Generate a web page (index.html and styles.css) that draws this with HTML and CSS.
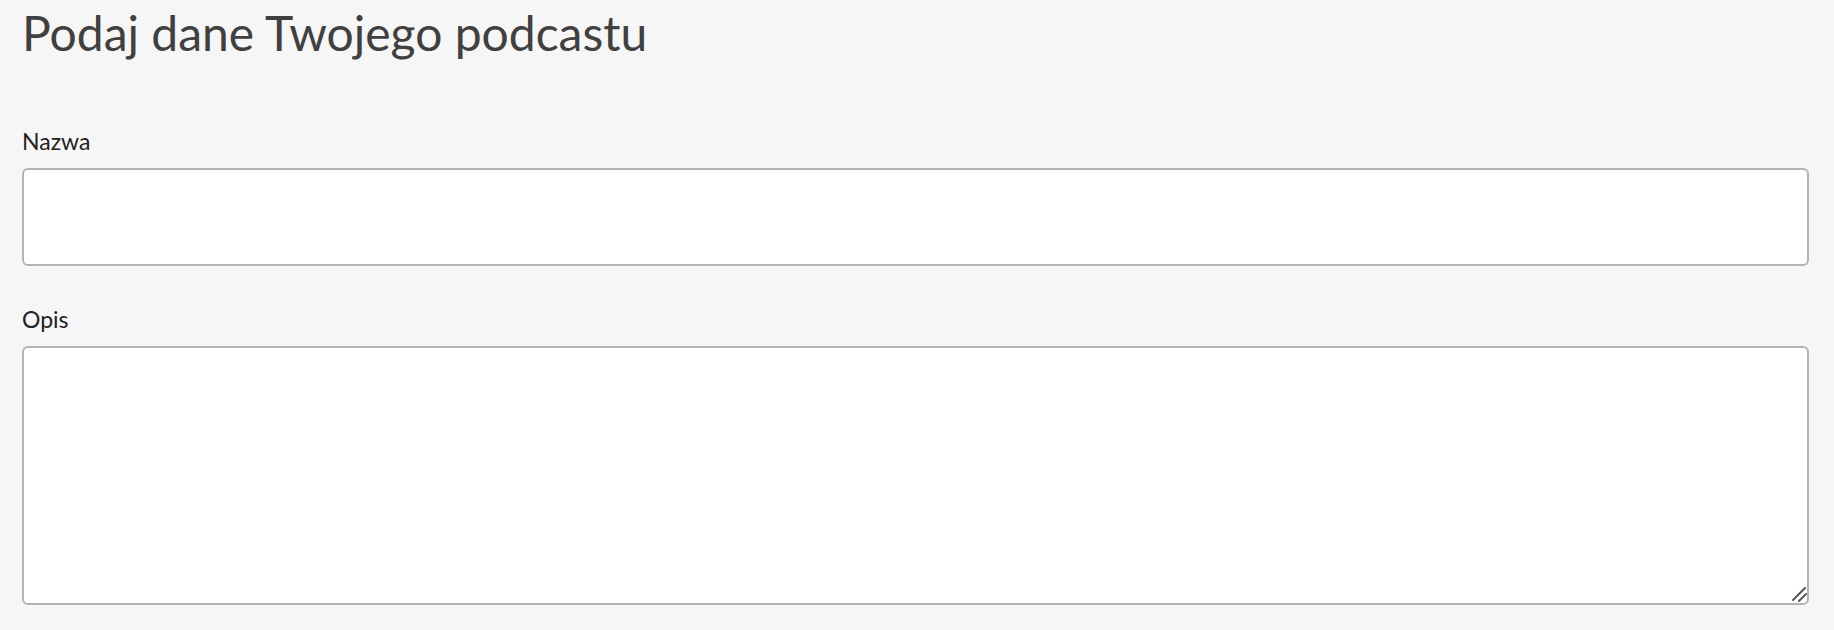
FILE: index.html
```html
<!DOCTYPE html>
<html lang="pl">
<head>
<meta charset="utf-8">
<title>Podaj dane Twojego podcastu</title>
<link rel="stylesheet" href="styles.css">
</head>
<body>
<main class="page">
  <h1 class="title">Podaj dane Twojego podcastu</h1>
  <form class="form">
    <div class="field">
      <label class="label" for="name">Nazwa</label>
      <input class="input" id="name" type="text">
    </div>
    <div class="field">
      <label class="label" for="desc">Opis</label>
      <div class="textarea-wrap">
        <textarea class="input textarea" id="desc"></textarea>
        <svg class="grip" width="16" height="16" viewBox="0 0 16 16" aria-hidden="true">
          <line x1="1" y1="14" x2="13" y2="2" stroke="#555" stroke-width="2" stroke-linecap="round"/>
          <line x1="7" y1="15" x2="14" y2="8" stroke="#555" stroke-width="2" stroke-linecap="round"/>
        </svg>
      </div>
    </div>
  </form>
</main>
</body>
</html>
```
FILE: styles.css
```css
html, body {
  margin: 0;
  padding: 0;
  background: #f6f6f6;
}
body {
  font-family: Lato, "Open Sans", sans-serif;
}
.page {
  padding: 4px 25px 0 22px;
}
.title {
  margin: 0;
  font-size: 48px;
  line-height: 58px;
  font-weight: 400;
  color: #404040;
}
.form {
  display: flex;
  flex-direction: column;
  gap: 39px;
  margin-top: 65px;
}
.field {
  display: flex;
  flex-direction: column;
  gap: 13px;
}
.label {
  font-size: 23px;
  line-height: 28px;
  color: #222;
}
.input {
  box-sizing: border-box;
  width: 100%;
  height: 98px;
  margin: 0;
  border: 2px solid #b3b3b3;
  border-radius: 6px;
  background: #fff;
  font: inherit;
  font-size: 22px;
  padding: 8px 12px;
  outline: none;
  display: block;
}
.textarea-wrap {
  position: relative;
}
.textarea {
  height: 259px;
  resize: none;
}
.grip {
  position: absolute;
  right: 1px;
  bottom: 3px;
  pointer-events: none;
}
```
